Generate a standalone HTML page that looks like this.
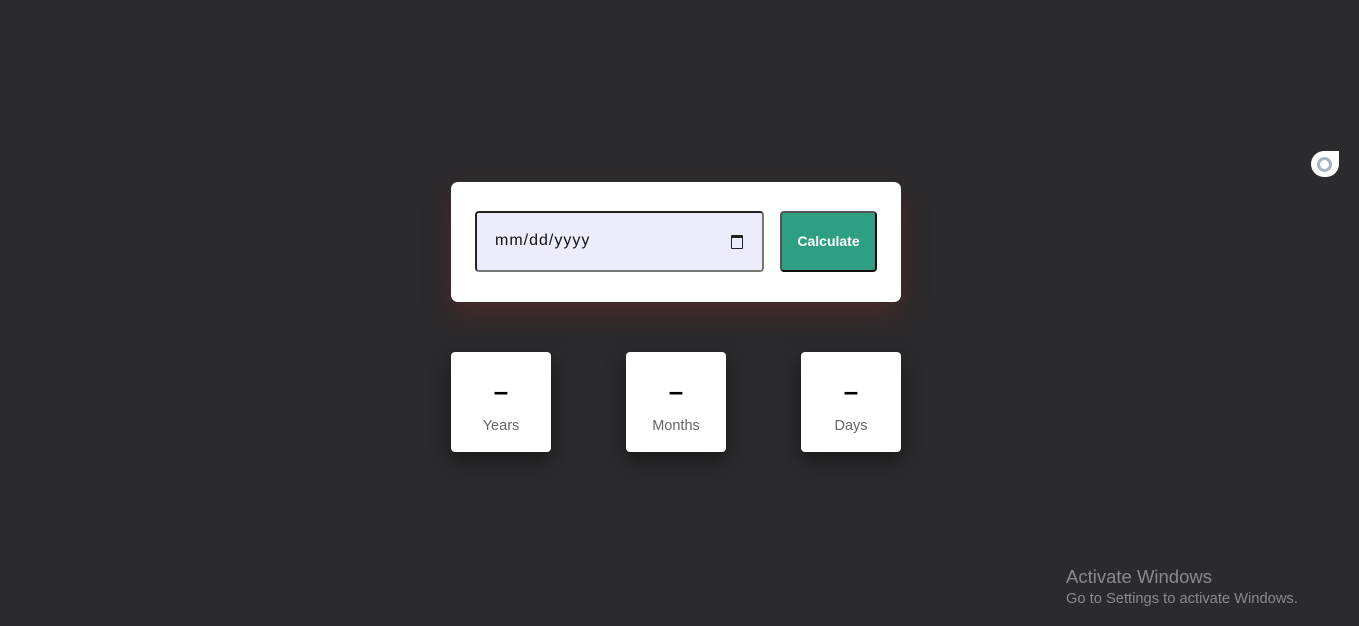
<!DOCTYPE html>
<html><head><style>
html,body{margin:0;padding:0;}
body{width:1359px;height:626px;background:#2b2a2c;position:relative;overflow:hidden;font-family:"Liberation Sans",sans-serif;}
.card{position:absolute;left:451px;top:182px;width:450px;height:120px;background:#fff;border-radius:7px;box-shadow:0 12px 28px rgba(110,40,40,0.45);}
.inp{position:absolute;left:475px;top:211px;width:285px;height:57px;background:#edecfb;border:2px solid #222;border-right-color:#777;border-bottom-color:#777;border-radius:4px;}
.inp span{position:absolute;left:18px;top:19px;font-size:16px;color:#111;letter-spacing:1px}
.cal{position:absolute;left:254px;top:22px;width:10px;height:10px;border:1.5px solid #222;border-top-width:3px;border-radius:1px}
.btn{position:absolute;left:780px;top:211px;width:93px;height:57px;background:#2f9f83;border:2px solid #111;border-top-color:#555;border-left-color:#555;border-radius:4px;color:#fff;font-weight:bold;font-size:14px;text-align:center;line-height:57px;}
.box{position:absolute;top:352px;width:100px;height:100px;background:#fff;border-radius:4px;box-shadow:0 8px 20px rgba(0,0,0,0.45);text-align:center;}
.box b{display:block;margin-top:24px;font-size:26px;line-height:30px;color:#000}
.box span{display:block;margin-top:12px;font-size:14.5px;color:#666}
.ic{position:absolute;left:1311px;top:151px;width:28px;height:26px;background:#fff;border-radius:13px 0 13px 13px;}
.ic i{position:absolute;left:6px;top:6px;width:9px;height:9px;border:3px solid #aab3bf;border-radius:50%}
.wm{position:absolute;left:1066px;top:566px;color:#8a8a8c;}
</style></head><body>
<div class="card"></div>
<div class="inp"><span>mm/dd/yyyy</span><div class="cal"></div></div>
<div class="btn">Calculate</div>
<div class="box" style="left:451px"><b>–</b><span>Years</span></div>
<div class="box" style="left:626px"><b>–</b><span>Months</span></div>
<div class="box" style="left:801px"><b>–</b><span>Days</span></div>
<div class="ic"><i></i></div>
<div class="wm"><div style="font-size:18.5px">Activate Windows</div><div style="font-size:14.7px;margin-top:3px">Go to Settings to activate Windows.</div></div>
</body></html>
